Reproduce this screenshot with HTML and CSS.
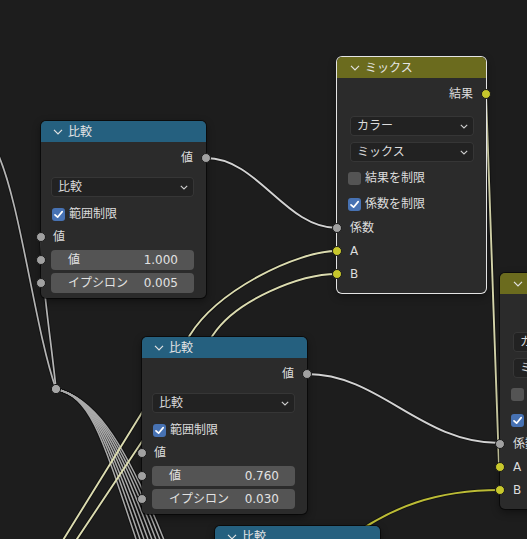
FILE: index.html
```html
<!DOCTYPE html>
<html lang="ja">
<head>
<meta charset="utf-8">
<title>ノードエディター</title>
<link rel="stylesheet" href="styles.css">
</head>
<body>
<div class="canvas">
  <svg class="wires" width="527" height="539" viewBox="0 0 527 539">
    <defs>
      <path id="l1" d="M-3,152 C20,200 35,330 56,389"/>
      <path id="l2" d="M41,237 C41,280 50,330 56,389"/>
      <path id="b0" d="M56,389 C90,397 100,430 138,545"/>
      <path id="b1" d="M56,389 C90,397 103,430 142,545"/>
      <path id="b2" d="M56,389 C90,397 106,430 146,545"/>
      <path id="b3" d="M56,389 C90,397 109,430 150,545"/>
      <path id="b4" d="M56,389 C90,397 112,430 154,545"/>
      <path id="b5" d="M56,389 C90,397 115,430 158,545"/>
      <path id="b6" d="M56,389 C90,397 118,430 162,545"/>
      <path id="b7" d="M56,389 C90,397 121,430 166,545"/>
      <path id="w1" d="M206,158 C258,158 285,228 337,228"/>
      <path id="w2" d="M307,374 C380,374 420,443 500,443"/>
      <path id="wa" d="M337,251 C297,251 218,290 190,335 L60,545"/>
      <path id="wb" d="M337,274 C300,274 236,300 213,335 L73,545"/>
      <path id="wr" d="M486,94 L499,466"/>
      <path id="wy" d="M340,545 C390,505 440,490 500,490"/>
    </defs>
    <g class="halo">
      <use href="#l1"/><use href="#l2"/>
      <use href="#b0"/><use href="#b1"/><use href="#b2"/><use href="#b3"/>
      <use href="#b4"/><use href="#b5"/><use href="#b6"/><use href="#b7"/>
      <use href="#w1"/><use href="#w2"/><use href="#wa"/><use href="#wb"/>
      <use href="#wr"/><use href="#wy"/>
    </g>
    <g class="grey">
      <use href="#l1"/><use href="#l2"/>
    </g>
    <g class="bundle">
      <use href="#b0"/><use href="#b1"/><use href="#b2"/><use href="#b3"/>
      <use href="#b4"/><use href="#b5"/><use href="#b6"/><use href="#b7"/>
    </g>
    <g class="light">
      <use href="#w1"/><use href="#w2"/>
    </g>
    <g class="cream">
      <use href="#wa"/><use href="#wb"/><use href="#wr"/>
    </g>
    <g class="yellow">
      <use href="#wy"/>
    </g>
    <circle class="reroute" cx="56" cy="389" r="4.6"/>
  </svg>

  <!-- 比較 node 1 -->
  <div class="node cmp n1">
    <div class="hdr blue">
      <svg class="hchev" viewBox="0 0 10 6"><polyline points="1,0.8 5,4.8 9,0.8"/></svg>
      <span>比較</span>
    </div>
    <div class="body">
      <div class="row out">値<i class="sock"></i></div>
      <div class="dd"><span>比較</span><svg class="dchev" viewBox="0 0 8 5"><polyline points="0.8,0.8 4,4 7.2,0.8"/></svg></div>
      <div class="row chk"><span class="cb on"><svg viewBox="0 0 13 13"><polyline points="3,6.8 5.6,9.2 10.2,3.6"/></svg></span>範囲制限</div>
      <div class="row in">値<i class="sock"></i></div>
      <div class="fld fld1"><i class="sock"></i><span>値</span><span>1.000</span></div>
      <div class="fld fld2"><i class="sock"></i><span>イプシロン</span><span>0.005</span></div>
    </div>
  </div>

  <!-- 比較 node 2 -->
  <div class="node cmp n2">
    <div class="hdr blue">
      <svg class="hchev" viewBox="0 0 10 6"><polyline points="1,0.8 5,4.8 9,0.8"/></svg>
      <span>比較</span>
    </div>
    <div class="body">
      <div class="row out">値<i class="sock"></i></div>
      <div class="dd"><span>比較</span><svg class="dchev" viewBox="0 0 8 5"><polyline points="0.8,0.8 4,4 7.2,0.8"/></svg></div>
      <div class="row chk"><span class="cb on"><svg viewBox="0 0 13 13"><polyline points="3,6.8 5.6,9.2 10.2,3.6"/></svg></span>範囲制限</div>
      <div class="row in">値<i class="sock"></i></div>
      <div class="fld fld1"><i class="sock"></i><span>値</span><span>0.760</span></div>
      <div class="fld fld2"><i class="sock"></i><span>イプシロン</span><span>0.030</span></div>
    </div>
  </div>

  <!-- ミックス node (selected) -->
  <div class="node mix n3 sel">
    <div class="hdr olive">
      <svg class="hchev" viewBox="0 0 10 6"><polyline points="1,0.8 5,4.8 9,0.8"/></svg>
      <span>ミックス</span>
    </div>
    <div class="body">
      <div class="row out">結果<i class="sock col"></i></div>
      <div class="dd dd1"><span>カラー</span><svg class="dchev" viewBox="0 0 8 5"><polyline points="0.8,0.8 4,4 7.2,0.8"/></svg></div>
      <div class="dd dd2"><span>ミックス</span><svg class="dchev" viewBox="0 0 8 5"><polyline points="0.8,0.8 4,4 7.2,0.8"/></svg></div>
      <div class="row chk chk1"><span class="cb"></span>結果を制限</div>
      <div class="row chk chk2"><span class="cb on"><svg viewBox="0 0 13 13"><polyline points="3,6.8 5.6,9.2 10.2,3.6"/></svg></span>係数を制限</div>
      <div class="row in in1">係数<i class="sock"></i></div>
      <div class="row in in2">A<i class="sock col"></i></div>
      <div class="row in in3">B<i class="sock col"></i></div>
    </div>
  </div>

  <!-- ミックス node (right, clipped) -->
  <div class="node mix n4">
    <div class="hdr olive">
      <svg class="hchev" viewBox="0 0 10 6"><polyline points="1,0.8 5,4.8 9,0.8"/></svg>
      <span>ミックス</span>
    </div>
    <div class="body">
      <div class="row out">結果<i class="sock col"></i></div>
      <div class="dd dd1"><span>カラー</span><svg class="dchev" viewBox="0 0 8 5"><polyline points="0.8,0.8 4,4 7.2,0.8"/></svg></div>
      <div class="dd dd2"><span>ミックス</span><svg class="dchev" viewBox="0 0 8 5"><polyline points="0.8,0.8 4,4 7.2,0.8"/></svg></div>
      <div class="row chk chk1"><span class="cb"></span>結果を制限</div>
      <div class="row chk chk2"><span class="cb on"><svg viewBox="0 0 13 13"><polyline points="3,6.8 5.6,9.2 10.2,3.6"/></svg></span>係数を制限</div>
      <div class="row in in1">係数<i class="sock"></i></div>
      <div class="row in in2">A<i class="sock col"></i></div>
      <div class="row in in3">B<i class="sock col"></i></div>
    </div>
  </div>

  <!-- 比較 node 3 (bottom, clipped) -->
  <div class="node cmp n5">
    <div class="hdr blue">
      <svg class="hchev" viewBox="0 0 10 6"><polyline points="1,0.8 5,4.8 9,0.8"/></svg>
      <span>比較</span>
    </div>
  </div>
</div>
</body>
</html>
```

FILE: styles.css
```css
* { box-sizing: border-box; margin: 0; padding: 0; }

html, body { background: #1d1d1d; }

body {
  width: 527px;
  height: 539px;
  overflow: hidden;
  font-family: "DejaVu Sans", "Noto Sans CJK JP", sans-serif;
  font-size: 12px;
  line-height: 1;
  color: #dcdcdc;
}

.canvas {
  position: relative;
  width: 527px;
  height: 539px;
  overflow: hidden;
  background: #1d1d1d;
}

/* ---------- wires ---------- */
.wires { position: absolute; left: 0; top: 0; }
.wires g { fill: none; stroke-linecap: round; stroke-linejoin: round; }
.halo   { stroke: #121212; stroke-width: 3.6; }
.grey   { stroke: #b4b4b4; stroke-width: 1.7; }
.bundle { stroke: #a9a9a9; stroke-width: 1.5; }
.light  { stroke: #d2d2d2; stroke-width: 1.9; }
.cream  { stroke: #dcdcb0; stroke-width: 1.9; }
.yellow { stroke: #bcbc36; stroke-width: 2; }
.reroute { fill: #a6a6a6; stroke: #161616; stroke-width: 1; }

/* ---------- nodes ---------- */
.node {
  position: absolute;
  background: #2b2b2b;
  border-radius: 5px;
  box-shadow: 0 0 0 1px rgba(0, 0, 0, 0.55), 0 3px 8px rgba(0, 0, 0, 0.45);
}
.node.sel {
  box-shadow: 0 0 0 1px #e4e4e4, 0 3px 8px rgba(0, 0, 0, 0.45);
}

.cmp { width: 165px; height: 177px; }
.mix { width: 149px; height: 236px; }

.n1 { left: 41px; top: 121px; }
.n2 { left: 142px; top: 337px; }
.n3 { left: 337px; top: 57px; }
.n4 { left: 500px; top: 273px; }
.n5 { left: 215px; top: 526px; }

.hdr {
  height: 21px;
  display: flex;
  align-items: center;
  gap: 5px;
  padding-left: 12px;
  border-radius: 5px 5px 0 0;
  color: #e6e6e6;
  white-space: nowrap;
}
.mix .hdr { padding-left: 13px; }
.blue  { background: #25607f; }
.olive { background: #6b6b1e; }

.hchev { width: 10px; height: 6px; flex: none; }
.hchev polyline { fill: none; stroke: #e2e2e2; stroke-width: 1.2; }

.body { padding: 5px 0 5px; }
.mix .body { padding-bottom: 8px; }

.row {
  position: relative;
  height: 22px;
  display: flex;
  align-items: center;
  white-space: nowrap;
}
.out { justify-content: flex-end; padding-right: 13px; }
.in  { padding-left: 12px; }
.mix .in { padding-left: 13px; }
.chk { padding-left: 11px; gap: 4px; }

.sock {
  position: absolute;
  top: 50%;
  width: 10px;
  height: 10px;
  margin-top: -5px;
  border-radius: 50%;
  background: #a1a1a1;
  border: 1px solid #1a1a1a;
}
.out .sock { right: -5px; }
.in .sock  { left: -5px; }
.sock.col  { background: #c8c82c; }

/* dropdown */
.dd {
  height: 20px;
  display: flex;
  align-items: center;
  justify-content: space-between;
  padding: 0 6px 0 7px;
  background: #222222;
  border-radius: 4px;
  box-shadow: inset 0 0 0 1px #363636;
  white-space: nowrap;
}
.cmp .dd { margin: 8px 12px 0 10px; }
.mix .dd { margin: 0 12px 0 13px; }
.mix .dd1 { margin-top: 11px; }
.mix .dd2 { margin-top: 6px; }
.dchev { width: 8px; height: 5px; flex: none; }
.dchev polyline { fill: none; stroke: #d0d0d0; stroke-width: 1.1; }

/* checkbox rows */
.cmp .chk { margin-top: 6px; }
.cmp .in  { height: 23px; }
.mix .chk1 { margin-top: 5px; }
.mix .chk2 { margin-top: 4px; }
.mix .in1 { margin-top: 2px; }
.mix .in2, .mix .in3 { margin-top: 1px; }

.cb {
  width: 13px;
  height: 13px;
  flex: none;
  border-radius: 3px;
  background: #545454;
  display: flex;
}
.cb.on { background: #4772b3; }
.cb svg { width: 13px; height: 13px; }
.cb polyline { fill: none; stroke: #ffffff; stroke-width: 1.7; stroke-linecap: round; stroke-linejoin: round; }

/* value fields */
.fld {
  position: relative;
  height: 20px;
  margin: 0 12px 0 10px;
  padding: 0 16px 0 17px;
  display: flex;
  align-items: center;
  justify-content: space-between;
  background: #545454;
  border-radius: 4px;
  color: #e2e2e2;
  white-space: nowrap;
}
.fld1 { margin-top: 2px; }
.fld2 { margin-top: 3px; }
.fld .sock { left: -15px; }
```
